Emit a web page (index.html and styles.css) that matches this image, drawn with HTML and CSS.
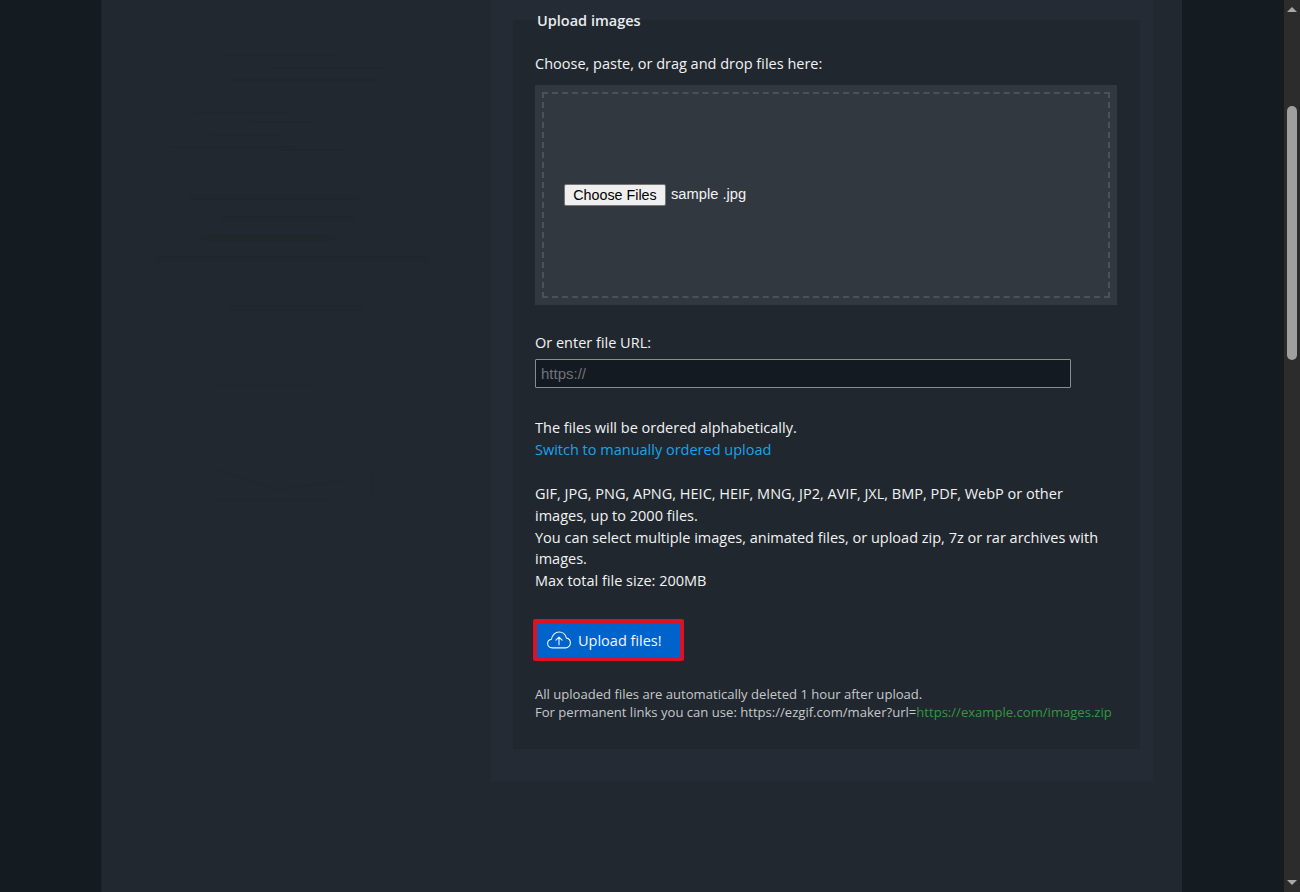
FILE: index.html
```html
<!DOCTYPE html>
<html lang="en">
<head>
<meta charset="utf-8">
<title>Upload images</title>
<link rel="stylesheet" href="styles.css">
</head>
<body>
<div class="viewport">
  <div class="page">
    <div class="wrapper">
      <aside class="ghost">
        <svg class="ghost-art" viewBox="0 0 389 892" width="389" height="892" fill="none" stroke="#1f262d" stroke-width="2" stroke-linecap="round">
          <path d="M125 55h110M170 68h110M125 80h150"/>
          <path d="M95 113h90M150 122h60M110 135h70M70 147h120M180 150h60"/>
          <path d="M90 197h165M120 219h130M100 238h130M55 259h270" stroke-width="5" opacity=".6"/>
          <path d="M130 308h130" stroke-width="5" opacity=".6"/>
          <path d="M105 357h110M115 385h100M110 410h150M112 440h80M115 470l60 20 70-10M110 500h120M270 470v30" opacity=".6"/>
        </svg>
      </aside>
      <main class="card">
        <section class="upload">
          <h2 class="legend">Upload images</h2>
          <p class="label">Choose, paste, or drag and drop files here:</p>
          <div class="drop">
            <div class="dashed">
              <span class="file-btn">Choose Files</span>
              <span class="file-name">sample .jpg</span>
            </div>
          </div>
          <p class="label url-label">Or enter file URL:</p>
          <div class="url-input">https://</div>
          <p class="order">The files will be ordered alphabetically.<br><a class="link" href="#">Switch to manually ordered upload</a></p>
          <p class="formats">GIF, JPG, PNG, APNG, HEIC, HEIF, MNG, JP2, AVIF, JXL, BMP, PDF, WebP or other images, up to 2000 files.<br>You can select multiple images, animated files, or upload zip, 7z or rar archives with images.<br>Max total file size: 200MB</p>
          <div class="button-row">
            <button class="upload-btn" type="button">
              <svg class="cloud" viewBox="0 0 24 18" width="24" height="18" fill="none" stroke="currentColor" stroke-width="1.1" stroke-linecap="round" stroke-linejoin="round">
                <path d="M6 16.9H5.2C2.6 16.9.6 15 .6 12.6c0-2.2 1.7-4 3.9-4.3C5 4.100 8.200 1 12.100 1c3.600 0 6.600 2.600 7.300 6.100 2.300.3 4 2.500 4 4.900 0 2.700-2.200 4.900-4.900 4.900H6z"/>
                <path d="M12 13.800V6.200M8.900 9.200 12 6.100l3.100 3.100"/>
              </svg>
              <span>Upload files!</span>
            </button>
          </div>
          <p class="note">All uploaded files are automatically deleted 1 hour after upload.<br>For permanent links you can use: https://ezgif.com/maker?url=<span class="green">https://example.com/images.zip</span></p>
        </section>
      </main>
    </div>
  </div>
  <div class="scrollbar">
    <span class="arrow-up"></span>
    <div class="track"><div class="thumb"></div></div>
    <span class="arrow-down"></span>
  </div>
</div>
</body>
</html>
```

FILE: styles.css
```css
* { box-sizing: border-box; }
html, body { margin: 0; height: 100%; overflow: hidden; }
body { background: #141b21; font-family: "Open Sans", "Noto Sans", sans-serif; color: #f1f3f4; font-size: 14.5px; line-height: 21.6px; }
.viewport { display: flex; width: 1300px; height: 892px; overflow: hidden; }
.page { flex: 1; padding-left: 101px; }
.wrapper { width: 1081px; height: 892px; background: #21282f; display: flex; border-left: 1px solid #1d242a; }
.ghost { flex: none; width: 389px; height: 892px; }
.ghost-art { display: block; }
.card { flex: none; width: 662px; height: 781px; background: #242b34; padding: 20px 13px 0 22px; }
.upload { position: relative; height: 729px; background: #21272e; padding: 0 22px; }
.legend { position: absolute; top: -10px; left: 24px; margin: 0; font-size: 14.5px; font-weight: 600; line-height: 22px; color: #e8ecee; }
.label { margin: 0; }
.upload > .label:first-of-type { padding-top: 33px; }
.drop { margin-top: 10px; height: 220px; background: #323840; padding: 7px; width: 582px; }
.dashed { height: 206px; border: 2px dashed #4b5158; display: flex; align-items: center; padding-left: 20px; color: #f1f3f4; font-family: "Liberation Sans", Arial, sans-serif; font-size: 14.7px; }
.file-btn { background: #efefef; color: #000; border: 1px solid #767676; border-radius: 2px; height: 22px; width: 102px; display: flex; align-items: center; justify-content: center; line-height: 20px; font-size: 14.3px; }
.file-name { margin-left: 5px; padding-top: 1px; }
.url-label { margin-top: 27px; }
.url-input { margin-top: 6px; width: 536px; height: 29px; background: #141a21; border: 1px solid #8a8d90; border-radius: 1px; color: #6f7378; padding-left: 5px; line-height: 27px; font-family: "Liberation Sans", Arial, sans-serif; font-size: 15px; }
.order { margin: 29px 0 0; }
.link { color: #1aa3ec; text-decoration: none; }
.formats { margin: 23px 0 0; }
.button-row { margin-top: 28px; margin-left: -2px; }
.upload-btn { display: flex; align-items: center; gap: 7px; width: 151px; height: 42px; background: #0063cc; border: 4px solid #dd1126; border-radius: 2px; color: #f4f8fc; font: inherit; padding: 0 0 0 10px; }
.cloud { flex: none; }
.note { margin: 24px 0 0; color: #c6c9cc; font-size: 13.08px; line-height: 18px; white-space: nowrap; }
.green { color: #2f9a3e; }
.scrollbar { flex: none; width: 16px; height: 892px; background: #2c2c2c; display: flex; flex-direction: column; align-items: center; }
.arrow-up, .arrow-down { flex: none; width: 0; height: 0; border-left: 5px solid transparent; border-right: 5px solid transparent; }
.arrow-up { margin-top: 7px; border-bottom: 5px solid #a8a8a8; }
.arrow-down { margin-bottom: 7px; border-top: 5px solid #a8a8a8; }
.track { flex: 1; width: 100%; padding: 94px 3px 0; }
.thumb { width: 10px; height: 254px; background: #9f9f9f; border-radius: 5px; }
```
